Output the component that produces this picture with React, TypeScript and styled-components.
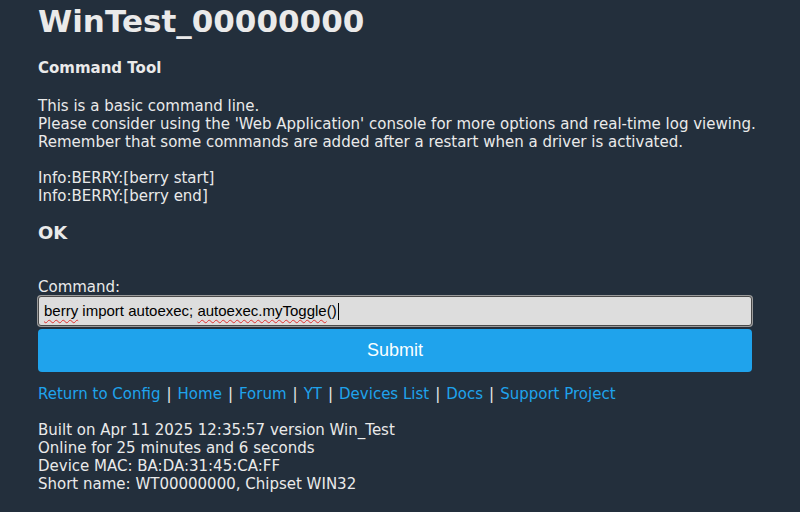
import styled, { createGlobalStyle } from "styled-components";

const GlobalStyle = createGlobalStyle`
	html, body {
		margin: 0;
		padding: 0;
		background: #232f3c;
	}
	body {
		font-family: "DejaVu Sans", Verdana, sans-serif;
		color: #eaeaea;
	}
`;

const Page = styled.div`
	width: 714px;
	padding: 3px 0 20px 38px;
	font-size: 15px;
	line-height: 18px;
`;

const Title = styled.h1`
	margin: 0;
	font-size: 31px;
	line-height: 36px;
	font-weight: 700;
	color: #eaeaea;
`;

const SubTitle = styled.h3`
	margin: 20px 0 0;
	font-size: 15px;
	line-height: 18px;
	font-weight: 700;
`;

const Text = styled.p<{ $gap: number }>`
	margin: ${(p) => p.$gap}px 0 0;
	white-space: nowrap;
`;

const Status = styled.div`
	margin-top: 17px;
	font-size: 18px;
	line-height: 22px;
	font-weight: 700;
`;

const Form = styled.form`
	margin-top: 34px;
	display: flex;
	flex-direction: column;
`;

const Label = styled.label`
	display: block;
`;

const InputBox = styled.div`
	box-sizing: border-box;
	height: 30px;
	width: 100%;
	padding: 0 5px;
	display: flex;
	align-items: center;
	background: #dddddd;
	border: 1px solid #4a4a4a;
	border-radius: 3px;
	box-shadow: 0 0 0 1px #9a9a9a;
	font-family: "Liberation Sans", Arial, sans-serif;
	font-size: 15px;
	color: #000;
	white-space: pre;
`;

const Misspelt = styled.span`
	text-decoration: underline wavy #e03030;
	text-decoration-thickness: 1px;
	text-underline-offset: 3px;
`;

const Caret = styled.span`
	display: inline-block;
	width: 1px;
	height: 17px;
	background: #000;
	margin: 0 1px;
`;

const Button = styled.button`
	margin-top: 3px;
	height: 43px;
	width: 100%;
	border: 0;
	border-radius: 4px;
	background: #1fa3ec;
	color: #faffff;
	font-family: "Liberation Sans", Arial, sans-serif;
	font-size: 18px;
	cursor: pointer;
`;

const LinkRow = styled.div`
	margin-top: 13px;
	color: #eaeaea;
	white-space: nowrap;
	a {
		color: #1fa3ec;
		text-decoration: none;
	}
`;

const Sep = styled.span`
	padding: 0 1.25px;
`;

const Info = styled.div`
	margin-top: 18px;
	white-space: nowrap;
`;

const links = [
	"Return to Config",
	"Home",
	"Forum",
	"YT",
	"Devices List",
	"Docs",
	"Support Project",
];

function App() {
	return (
		<>
			<GlobalStyle />
			<Page>
				<Title>WinTest_00000000</Title>
				<SubTitle>Command Tool</SubTitle>
				<Text $gap={20}>
					This is a basic command line.
					<br />
					Please consider using the 'Web Application' console for more options
					and real-time log viewing.
					<br />
					Remember that some commands are added after a restart when a driver is
					activated.
				</Text>
				<Text $gap={18}>
					Info:BERRY:[berry start]
					<br />
					Info:BERRY:[berry end]
				</Text>
				<Status>OK</Status>
				<Form onSubmit={(e) => e.preventDefault()}>
					<Label>Command:</Label>
					<InputBox role='textbox'>
						<Misspelt>berry</Misspelt> import autoexec;{" "}
						<Misspelt>autoexec.myToggle</Misspelt>()
						<Caret />
					</InputBox>
					<Button type='submit'>Submit</Button>
				</Form>
				<LinkRow>
					{links.map((l, i) => (
						<span key={l}>
							{i > 0 && <Sep> | </Sep>}
							<a href='#'>{l}</a>
						</span>
					))}
				</LinkRow>
				<Info>
					Built on Apr 11 2025 12:35:57 version Win_Test
					<br />
					Online for 25 minutes and 6 seconds
					<br />
					Device MAC: BA:DA:31:45:CA:FF
					<br />
					Short name: WT00000000, Chipset WIN32
				</Info>
			</Page>
		</>
	);
}

export default App;
